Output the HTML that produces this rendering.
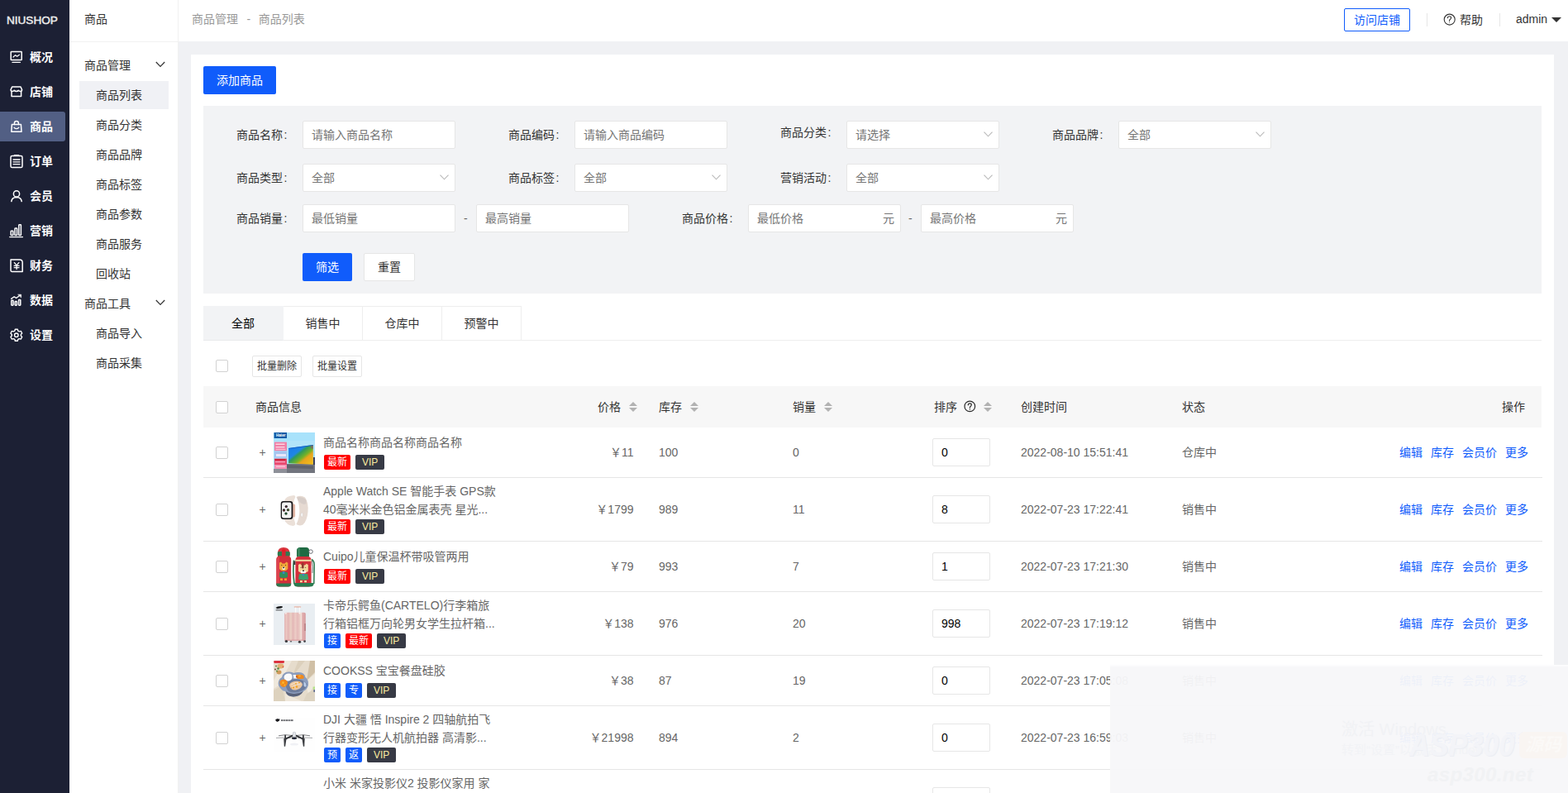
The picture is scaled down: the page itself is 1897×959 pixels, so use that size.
<!DOCTYPE html>
<html lang="zh-CN">
<head>
<meta charset="utf-8">
<title>商品列表</title>
<style>
*{box-sizing:border-box;margin:0;padding:0}
html,body{width:1897px;height:959px;overflow:hidden}
body{position:relative;background:#f0f1f4;font-family:"Liberation Sans","Noto Sans CJK SC",sans-serif;font-size:14px;color:#333;line-height:1}
a{text-decoration:none;color:inherit}
.abs{position:absolute}
/* ---------- first sidebar ---------- */
#side1{position:absolute;left:0;top:0;width:84px;height:959px;background:#1c2034}
#logo{position:absolute;left:0;top:0;width:84px;height:48px}
#logo svg{position:absolute;left:0;top:0}
.nav1{position:absolute;left:0;width:79px;height:36px;border-radius:0 3px 3px 0;color:#fff;font-weight:bold;font-size:14px;line-height:36px;padding-left:36px;white-space:nowrap}
.nav1.on{background:#525f84}
.nav1 svg{position:absolute;left:11px;top:10px;width:17px;height:17px}
/* ---------- second sidebar ---------- */
#side2{position:absolute;left:84px;top:0;width:132px;height:959px;background:#fff;border-right:1px solid #f1f1f1}
#side2 .tt{height:51px;line-height:46px;padding-left:18px;font-size:14px;color:#333;border-bottom:1px solid #f1f1f1}
.grp{position:absolute;left:0;width:131px;height:36px;line-height:36px;padding-left:18px;color:#333}
.grp svg{position:absolute;left:104px;top:13px}
.itm{position:absolute;left:12px;width:108px;height:34px;line-height:34px;padding-left:20px;color:#333}
.itm.on{background:#f0f1f5}
/* ---------- header ---------- */
#hd{position:absolute;left:216px;top:0;width:1681px;height:50px;background:#fff}
#crumb{position:absolute;left:16px;top:0;line-height:46px;color:#999;font-size:14px;white-space:pre}
#visit{position:absolute;left:1410px;top:10px;width:80px;height:28px;border:1px solid #105cfb;border-radius:2px;color:#105cfb;text-align:center;line-height:27px;font-size:14px}
.vline{position:absolute;top:16px;width:1px;height:16px;background:#e6e6e6}
/* ---------- card ---------- */
#card{position:absolute;left:231px;top:66px;width:1649px;height:900px;background:#fff}
.btn{position:absolute;height:34px;line-height:34px;text-align:center;border-radius:2px;font-size:14px}
.btn.pri{background:#105cfb;color:#fff}
.btn.def{background:#fff;border:1px solid #e6e6e6;color:#333;line-height:32px}
#filter{position:absolute;left:15px;top:62px;width:1619px;height:227px;background:#f2f3f5}
.lab{position:absolute;width:110px;text-align:right;line-height:34px;height:34px;color:#333;white-space:nowrap}
.inp{position:absolute;width:185px;height:34px;background:#fff;border:1px solid #e6e6e6;border-radius:2px;line-height:32px;padding-left:10px;color:#757575;white-space:nowrap}
.inp svg{position:absolute;right:7px;top:12px}
.inp .u{position:absolute;right:7px;top:0;color:#757575}
.lab .cl{margin-left:1.5px}
.dash{position:absolute;line-height:34px;color:#666}
/* ---------- tabs ---------- */
#tabs{position:absolute;left:15px;top:304px;width:1619px;height:42px;border-bottom:1px solid #eeeeee}
.tab{position:absolute;top:0;height:42px;line-height:41px;text-align:center;color:#333;border:1px solid #eeeeee;border-left:none}
.tab.on{background:#f2f3f5;border-color:#f2f3f5 #f2f3f5 #e9eaec #f2f3f5;color:#000}
/* ---------- table ---------- */
.ck{position:absolute;width:15px;height:15px;border:1px solid #d2d2d2;border-radius:2px;background:#fff}
.sbtn{position:absolute;top:364px;height:26px;width:60px;border:1px solid #e6e6e6;border-radius:2px;background:#fff;font-size:12px;line-height:24px;text-align:center;color:#333}
#thead{position:absolute;left:15px;top:401px;width:1619px;height:50px;background:#f7f7f7;color:#333}
#thead .th{position:absolute;top:0;line-height:50px;white-space:nowrap}
.sort{position:absolute;top:19px;width:10px;height:12px}
.sort:before,.sort:after{content:"";position:absolute;left:0;border:5px solid transparent}
.sort:before{top:-5px;border-bottom-color:#b2b2b2}
.sort:after{top:7px;border-top-color:#b2b2b2}
.row{position:absolute;left:15px;width:1620px;border-bottom:1px solid #e6e6e6;color:#666}
.row .c{position:absolute;white-space:nowrap;line-height:20px;height:20px;top:50%;margin-top:-10px}
.row .plus{left:67px;width:9px;text-align:center;color:#666;font-size:14px}
.row .img{position:absolute;left:85px;top:50%;margin-top:-24px;width:50px;height:50px;overflow:hidden}
.row .img svg{display:block}
.row .info{position:absolute;left:145px;top:0}
.row .nm{position:absolute;left:0;white-space:nowrap;line-height:22px;color:#666;font-size:14px}
.tags{position:absolute;left:1px;white-space:nowrap;height:18px;display:flex}
.tg{display:block;font-weight:normal;font-style:normal;height:18px;line-height:18px;padding:0 4px;font-size:12px;color:#fff;border-radius:2px;margin-right:6px}
.tg.r{background:#ff0000}
.tg.b{background:#105cfb}
.tg.v{background:#373a45;color:#f9eba0;padding:0 8px;font-size:12px}
.row .price{right:1099.5px;text-align:right}
.row .sin{position:absolute;left:882px;top:50%;margin-top:-17px;width:70px;height:34px;border:1px solid #e6e6e6;border-radius:2px;background:#fff;color:#000;line-height:32px;padding-left:10px}
.row .ops{right:17px;color:#105cfb;word-spacing:0}
.row .ops a{margin-left:10px;color:#105cfb}
/* ---------- overlay ---------- */
#ov{position:absolute;left:1343px;top:804px;width:554px;height:155px;background:rgba(247,247,249,0.955);border-top:2px solid rgba(252,252,253,0.97);overflow:hidden}
#ov span{position:absolute;white-space:nowrap}
#ov .w1{left:280px;top:66px;font-size:20px;color:#f1f2f5}
#ov .w2{left:280px;top:93px;font-size:15px;color:#f2f3f6}
#ov .w3{left:362px;top:76px;font-size:36px;line-height:40px;font-weight:bold;font-style:italic;color:#f3f4f8;text-shadow:1px 1px 0 #eceef3;transform:scaleX(0.95);transform-origin:0 0}
#ov .w4{left:495px;top:79px;width:58px;height:32px;border-radius:6px;background:#f9f5f2;color:#fbf9f7;font-size:22px;font-weight:bold;font-style:italic;line-height:32px;text-align:center}
#ov .w5{left:384px;top:116px;font-size:24px;line-height:30px;font-weight:bold;font-style:italic;color:#f1f2f4;letter-spacing:0.4px}
</style>
</head>
<body>

<!-- first sidebar -->
<div id="side1">
  <div id="logo">
    <svg width="84" height="48" viewBox="0 0 84 48"><text x="7.900" y="29" font-family="Liberation Sans, sans-serif" font-size="12.700" fill="#ececec" stroke="#ececec" stroke-width="0.450" textLength="62" lengthAdjust="spacingAndGlyphs">NIUSHOP</text></svg>
  </div>
  <!--NAV1-->
  <a class="nav1" style="top:51px"><svg viewBox="0 0 17 17" fill="none" stroke="#fff" stroke-width="1.5" stroke-linecap="round" stroke-linejoin="round"><rect x="2.2" y="1.6" width="13" height="10" rx="0.6"/><path d="M5 8 L7.6 5.6 L9.6 7.2 L12.4 5.2"  stroke-width="1.2"/><path d="M4 14.4 H13.4" stroke-width="1.3"/></svg>概况</a>
  <a class="nav1" style="top:93px"><svg viewBox="0 0 17 17" fill="none" stroke="#fff" stroke-width="1.5" stroke-linecap="round" stroke-linejoin="round"><path d="M3.6 2 H14 L15.6 5.6 Q15.6 7.4 13.8 7.4 Q12.2 7.4 11.4 6.4 Q10.4 7.4 8.8 7.4 Q7.2 7.4 6.2 6.4 Q5.4 7.4 3.8 7.4 Q2 7.4 2 5.6 Z"/><path d="M3 7.6 V13.4 H14.6 V7.6"/></svg>店铺</a>
  <a class="nav1 on" style="top:135px"><svg viewBox="0 0 17 17" fill="none" stroke="#fff" stroke-width="1.5" stroke-linecap="round" stroke-linejoin="round"><path d="M3.4 5.6 H14.4 L15 14.2 H2.8 Z"/><path d="M6.4 5.4 V4 A2.5 2.5 0 0 1 11.4 4 V5.4"/><path d="M6 9.2 Q8.9 12 11.8 9.2" stroke-width="1.3"/></svg>商品</a>
  <a class="nav1" style="top:177px"><svg viewBox="0 0 17 17" fill="none" stroke="#fff" stroke-width="1.5" stroke-linecap="round" stroke-linejoin="round"><rect x="2" y="1.6" width="14" height="14" rx="1.6"/><path d="M6.4 0.9 H11.6" stroke-width="1.6"/><path d="M5 6 H13 M5 8.8 H13 M5 11.6 H13" stroke-width="1.3"/></svg>订单</a>
  <a class="nav1" style="top:219px"><svg viewBox="0 0 17 17" fill="none" stroke="#fff" stroke-width="1.5" stroke-linecap="round" stroke-linejoin="round"><circle cx="9" cy="5.4" r="3.6"/><path d="M2.8 14.6 Q3.4 9.8 9 9.6 Q14.6 9.8 15.2 14.6"/></svg>会员</a>
  <a class="nav1" style="top:261px"><svg viewBox="0 0 17 17" fill="none" stroke="#fff" stroke-width="1.5" stroke-linecap="round" stroke-linejoin="round" stroke-width="1.2"><rect x="2.2" y="8.2" width="2.6" height="5.4" rx="0.6"/><rect x="7" y="5" width="2.6" height="8.6" rx="0.6"/><rect x="11.8" y="0.8" width="2.6" height="12.8" rx="0.6"/><path d="M0.6 15.6 H16.6" stroke-width="1.1"/></svg>营销</a>
  <a class="nav1" style="top:303px"><svg viewBox="0 0 17 17" fill="none" stroke="#fff" stroke-width="1.5" stroke-linecap="round" stroke-linejoin="round"><path d="M2 1 H12.6 Q16.2 1 16.2 4.6 V15.4 H3.4 Q2 15.4 2 14 Z"/><path d="M6.4 4.6 L9.1 7.8 L11.8 4.6 M9.1 7.8 V12.6 M6.2 8.4 H12 M6.2 10.6 H12" stroke-width="1.3"/></svg>财务</a>
  <a class="nav1" style="top:345px"><svg viewBox="0 0 17 17" fill="none" stroke="#fff" stroke-width="1.5" stroke-linecap="round" stroke-linejoin="round" stroke-width="1.2"><rect x="2.8" y="8.2" width="2.2" height="6" rx="0.6"/><rect x="7.2" y="9.6" width="2.2" height="4.6" rx="0.6"/><rect x="11.6" y="7.4" width="2.2" height="6.8" rx="0.6"/><path d="M2.6 6.4 L6.2 3.8 L8.6 5.6 L13 2.2" stroke-width="1.3"/><path d="M11 1.2 H14.6 V4.6 Z" fill="#fff" stroke-width="0.6"/></svg>数据</a>
  <a class="nav1" style="top:387px"><svg viewBox="0 0 17 17" fill="none" stroke="#fff" stroke-width="1.5" stroke-linecap="round" stroke-linejoin="round"><path d="M7.3 1.2 H10.3 L10.8 3.1 L12.3 3.9 L14.2 3.4 L15.7 6 L14.3 7.4 V9.1 L15.7 10.5 L14.2 13.1 L12.3 12.6 L10.8 13.4 L10.3 15.3 H7.3 L6.8 13.4 L5.3 12.6 L3.4 13.1 L1.9 10.5 L3.3 9.1 V7.4 L1.9 6 L3.4 3.4 L5.3 3.9 L6.8 3.1 Z" stroke-width="1.4"/><circle cx="8.8" cy="8.25" r="2.3" stroke-width="1.4"/></svg>设置</a>
  <!--/NAV1-->
</div>

<!-- second sidebar -->
<div id="side2">
  <div class="tt">商品</div>
  <!--NAV2-->
  <div class="grp" style="top:61px">商品管理<svg width="12" height="8" viewBox="0 0 12 8" fill="none" stroke="#333" stroke-width="1.2"><path d="M0.8 1 L6 6.4 L11.2 1"/></svg></div>
  <a class="itm on" style="top:98px">商品列表</a>
  <a class="itm" style="top:134px">商品分类</a>
  <a class="itm" style="top:170px">商品品牌</a>
  <a class="itm" style="top:206px">商品标签</a>
  <a class="itm" style="top:242px">商品参数</a>
  <a class="itm" style="top:278px">商品服务</a>
  <a class="itm" style="top:314px">回收站</a>
  <div class="grp" style="top:349px">商品工具<svg width="12" height="8" viewBox="0 0 12 8" fill="none" stroke="#333" stroke-width="1.2"><path d="M0.8 1 L6 6.4 L11.2 1"/></svg></div>
  <a class="itm" style="top:386px">商品导入</a>
  <a class="itm" style="top:422px">商品采集</a>
  <!--/NAV2-->
</div>

<!-- header -->
<div id="hd">
  <div id="crumb"><span>商品管理</span><span style="margin:0 9.700px 0 10.500px">-</span><span>商品列表</span></div>
  <a id="visit">访问店铺</a>
  <!--HDR-->
  <i class="vline" style="left:1510px"></i>
  <svg class="abs" style="left:1530px;top:16px" width="15" height="15" viewBox="0 0 15 15" fill="none" stroke="#333" stroke-width="1.1"><circle cx="7.7" cy="7.6" r="6.5"/><path d="M5.4 5.8 Q5.4 3.8 7.5 3.8 Q9.6 3.8 9.6 5.6 Q9.6 6.8 8.4 7.5 Q7.5 8 7.5 9.2" stroke-linecap="round"/><circle cx="7.5" cy="11.1" r="0.5" fill="#333" stroke="none"/></svg>
  <span class="abs" style="left:1550px;top:0;line-height:48px;color:#333;white-space:nowrap">帮助</span>
  <i class="vline" style="left:1598px"></i>
  <span class="abs" style="left:1618px;top:0;line-height:46px;color:#333;white-space:nowrap">admin</span>
  <i class="abs" style="left:1661px;top:21px;width:0;height:0;border:6px solid transparent;border-top-color:#333;border-bottom:none"></i>
  <!--/HDR-->
</div>

<!-- card -->
<div id="card">
  <a class="btn pri" style="left:15px;top:14px;width:88px">添加商品</a>
  <div id="filter">
    <!--FILTER-->
    <label class="lab" style="left:-8.5px;top:18px">商品名称<span class="cl">:</span></label>
    <div class="inp" style="left:120px;top:18px">请输入商品名称</div>
    <label class="lab" style="left:320.5px;top:18px">商品编码<span class="cl">:</span></label>
    <div class="inp" style="left:449px;top:18px">请输入商品编码</div>
    <label class="lab" style="left:649.5px;top:15px">商品分类<span class="cl">:</span></label>
    <div class="inp" style="left:778px;top:18px">请选择<svg width="11" height="7" viewBox="0 0 11 7" fill="none" stroke="#b9b9b9" stroke-width="1.15"><path d="M0.5 0.7 L5.5 5.8 L10.5 0.7"/></svg></div>
    <label class="lab" style="left:978.5px;top:18px">商品品牌<span class="cl">:</span></label>
    <div class="inp" style="left:1107px;top:18px">全部<svg width="11" height="7" viewBox="0 0 11 7" fill="none" stroke="#b9b9b9" stroke-width="1.15"><path d="M0.5 0.7 L5.5 5.8 L10.5 0.7"/></svg></div>
    <label class="lab" style="left:-8.5px;top:70px">商品类型<span class="cl">:</span></label>
    <div class="inp" style="left:120px;top:70px">全部<svg width="11" height="7" viewBox="0 0 11 7" fill="none" stroke="#b9b9b9" stroke-width="1.15"><path d="M0.5 0.7 L5.5 5.8 L10.5 0.7"/></svg></div>
    <label class="lab" style="left:320.5px;top:70px">商品标签<span class="cl">:</span></label>
    <div class="inp" style="left:449px;top:70px">全部<svg width="11" height="7" viewBox="0 0 11 7" fill="none" stroke="#b9b9b9" stroke-width="1.15"><path d="M0.5 0.7 L5.5 5.8 L10.5 0.7"/></svg></div>
    <label class="lab" style="left:649.5px;top:70px">营销活动<span class="cl">:</span></label>
    <div class="inp" style="left:778px;top:70px">全部<svg width="11" height="7" viewBox="0 0 11 7" fill="none" stroke="#b9b9b9" stroke-width="1.15"><path d="M0.5 0.7 L5.5 5.8 L10.5 0.7"/></svg></div>
    <label class="lab" style="left:-8.5px;top:119px">商品销量<span class="cl">:</span></label>
    <div class="inp" style="left:120px;top:119px">最低销量</div>
    <span class="dash" style="left:315px;top:119px">-</span>
    <div class="inp" style="left:330px;top:119px">最高销量</div>
    <label class="lab" style="left:530.5px;top:119px">商品价格<span class="cl">:</span></label>
    <div class="inp" style="left:659px;top:119px">最低价格<span class="u">元</span></div>
    <span class="dash" style="left:853px;top:119px">-</span>
    <div class="inp" style="left:868px;top:119px">最高价格<span class="u">元</span></div>
    <a class="btn pri" style="left:120px;top:178px;width:60px">筛选</a>
    <a class="btn def" style="left:194px;top:178px;width:62px">重置</a>
  <!--/FILTER-->
  </div>
  <div id="tabs">
    <!--TABS-->
    <a class="tab on" style="left:0px;width:97px">全部</a>
    <a class="tab" style="left:97px;width:96px">销售中</a>
    <a class="tab" style="left:193px;width:96px">仓库中</a>
    <a class="tab" style="left:289px;width:96px">预警中</a>
  <!--/TABS-->
  </div>
  <!--TABLE-->
  <i class="ck" style="left:30px;top:369px"></i>
  <a class="sbtn" style="left:74px">批量删除</a>
  <a class="sbtn" style="left:147px">批量设置</a>
  <div id="thead">
    <i class="ck" style="left:15px;top:18px"></i>
    <span class="th" style="left:63px">商品信息</span>
    <span class="th" style="left:477px">价格</span><i class="sort" style="left:515px"></i>
    <span class="th" style="left:551px">库存</span><i class="sort" style="left:589px"></i>
    <span class="th" style="left:713px">销量</span><i class="sort" style="left:751px"></i>
    <span class="th" style="left:884px">排序</span><svg class="abs" style="left:920px;top:17px" width="15" height="15" viewBox="0 0 15 15" fill="none" stroke="#2a2a2a" stroke-width="1.2"><circle cx="7.3" cy="7.4" r="6.3"/><path d="M5.3 5.8 Q5.3 3.9 7.3 3.9 Q9.3 3.9 9.3 5.6 Q9.3 6.7 8.2 7.4 Q7.3 8 7.3 9.1" stroke-linecap="round"/><circle cx="7.3" cy="11" r="0.65" fill="#2a2a2a" stroke="none"/></svg><i class="sort" style="left:944px"></i>
    <span class="th" style="left:989px">创建时间</span>
    <span class="th" style="left:1184px">状态</span>
    <span class="th" style="right:20px">操作</span>
  </div>
  <div class="row" style="top:451px;height:61px">
    <i class="ck" style="left:15px;top:23px"></i>
    <span class="c plus">+</span>
    <div class="img"><svg width="50" height="50" viewBox="0 0 50 50"><defs><linearGradient id="tvg" x1="0" y1="0" x2="1" y2="1"><stop offset="0" stop-color="#1877ea"/><stop offset="0.36" stop-color="#1f86e4"/><stop offset="0.44" stop-color="#2f9a5c"/><stop offset="0.6" stop-color="#74b227"/><stop offset="0.7" stop-color="#e9a41e"/><stop offset="1" stop-color="#f4c21a"/></linearGradient></defs>
<rect width="50" height="49" fill="#a8e2fb"/><rect x="0" y="10" width="50" height="12" fill="#b9e6f8" opacity="0.6"/>
<rect x="0.600" y="0" width="15.400" height="7" fill="#0f5aa6"/><text x="3" y="5.300" font-family="Liberation Sans, sans-serif" font-size="4.600" font-weight="bold" fill="#fff">Haier</text>
<rect x="0" y="44" width="50" height="5" fill="#8d9098"/><path d="M16 38 H50 V49 H16 Z" fill="#72757e"/><path d="M16 39 L48 40.500 L48 44 L16 43 Z" fill="#5f626c"/>
<rect x="47.800" y="30" width="2.200" height="9" fill="#3a4060"/>
<rect x="1" y="11.600" width="15" height="10.600" fill="#f17ea6"/><rect x="2.500" y="13.500" width="11" height="1.500" fill="#fbd3e0"/><rect x="2.500" y="17" width="11" height="1.400" fill="#fbd3e0"/><rect x="2.500" y="19.800" width="12" height="1.200" fill="#f9c0d4"/>
<rect x="1" y="22.800" width="15" height="7.600" fill="#a6c5ef"/><rect x="3" y="26" width="12" height="3" fill="#e9e6fa"/>
<rect x="1" y="31.600" width="15" height="7.400" fill="#e84a70"/><rect x="1.500" y="32" width="13" height="1.600" fill="#c51f2f"/><rect x="2" y="35" width="12" height="1.200" fill="#f7a8c0"/>
<rect x="1" y="39" width="15" height="5" fill="#f58fb3"/><rect x="3" y="40.500" width="11" height="1.200" fill="#fbd0de"/>
<path d="M18.100 19 L47.800 15 L47.800 38.800 L18.100 37.200 Z" fill="url(#tvg)"/><path d="M18.100 19 L47.800 15 L47.800 16 L18.100 20 Z" fill="#1562c9"/><path d="M45 16 L47.800 15.600 L47.800 20 L45 19 Z" fill="#8c5a6a" opacity="0.700"/>
</svg></div>
    <div class="info"><span class="nm" style="top:7px">商品名称商品名称商品名称</span><div class="tags" style="top:33px"><b class="tg r">最新</b><b class="tg v">VIP</b></div></div>
    <span class="c price">￥11</span>
    <span class="c" style="left:551px">100</span>
    <span class="c" style="left:713px">0</span>
    <div class="sin">0</div>
    <span class="c" style="left:989px">2022-08-10 15:51:41</span>
    <span class="c" style="left:1184px">仓库中</span>
    <span class="c ops"><a>编辑</a><a>库存</a><a>会员价</a><a>更多</a></span>
  </div>
  <div class="row" style="top:512px;height:77px">
    <i class="ck" style="left:15px;top:31px"></i>
    <span class="c plus">+</span>
    <div class="img"><svg width="50" height="50" viewBox="0 0 50 50"><rect width="50" height="50" fill="#fff"/>
<path d="M27.500 9 Q33 6.500 38 9.500 Q42.500 16 41.500 27 Q40.500 38 35.500 42.500 Q31 44.500 27.500 42 Q31.500 34 31.300 25 Q31 15 27.500 9 Z" fill="#e6dad2"/>
<path d="M28.500 9.500 Q34 8 39 12 Q40.500 15 39 17.500 Q34 19 29.500 13 Z" fill="#d3c9c6" opacity="0.800"/>
<path d="M13 14 Q14.500 7.500 24.500 7 Q27.500 7.500 25.500 11 Q23.500 15 23.800 25 Q24 35 26 40 Q27 43.500 23.500 44 Q15.500 43 12.500 36 Z" fill="#ebe0d8"/>
<ellipse cx="34.200" cy="30.500" rx="1.300" ry="2.600" fill="#f8f8f8" stroke="#c9c3c0" stroke-width="0.400"/>
<rect x="22.500" y="17.500" width="3.600" height="16" rx="1.600" fill="#e3b7a6"/>
<rect x="8.700" y="14" width="14.600" height="22" rx="3.200" fill="#17171a"/>
<rect x="10" y="15.600" width="11.600" height="18.800" rx="2.200" fill="#f3f3f3"/>
<circle cx="15.300" cy="20.600" r="1.650" fill="#20242a"/><circle cx="12.500" cy="25" r="1.650" fill="#2a2326"/><circle cx="17.500" cy="24.700" r="1.650" fill="#1f2b22"/><circle cx="15" cy="29.100" r="1.650" fill="#16311f"/>
<circle cx="15.300" cy="21" r="0.600" fill="#c23a4a"/><circle cx="17.800" cy="24.700" r="0.600" fill="#9fb23a"/><circle cx="12.300" cy="25.400" r="0.500" fill="#b8322e"/><circle cx="15" cy="29.300" r="0.600" fill="#2f9a4e"/>
</svg></div>
    <div class="info"><span class="nm" style="top:5px">Apple Watch SE 智能手表 GPS款</span><span class="nm" style="top:27px">40毫米米金色铝金属表壳 星光...</span><div class="tags" style="top:50px"><b class="tg r">最新</b><b class="tg v">VIP</b></div></div>
    <span class="c price">￥1799</span>
    <span class="c" style="left:551px">989</span>
    <span class="c" style="left:713px">11</span>
    <div class="sin">8</div>
    <span class="c" style="left:989px">2022-07-23 17:22:41</span>
    <span class="c" style="left:1184px">销售中</span>
    <span class="c ops"><a>编辑</a><a>库存</a><a>会员价</a><a>更多</a></span>
  </div>
  <div class="row" style="top:589px;height:61px">
    <i class="ck" style="left:15px;top:23px"></i>
    <span class="c plus">+</span>
    <div class="img"><svg width="50" height="50" viewBox="0 0 50 50"><rect width="50" height="50" fill="#fff"/>
<path d="M5 8 Q5 1 12 1 Q19.500 1 19.500 8 V12 H5 Z" fill="#d9363f"/>
<rect x="4.800" y="6" width="15" height="5.600" rx="1.500" fill="#2e7a4f"/>
<rect x="10" y="3" width="4.600" height="9.500" rx="1.500" fill="#d42531"/><rect x="10.800" y="3.600" width="3" height="2" fill="#f01818"/>
<path d="M3.200 16 Q3.200 11.500 7.500 11.500 H17 Q21.200 11.500 21.200 16 V45 Q21.200 48.500 17.500 48.500 H7 Q3.200 48.500 3.200 45 Z" fill="#d22f3a"/>
<path d="M4 16 Q4 12.500 7 12.500 V47.500 Q4 47.500 4 45 Z" fill="#e24a55" opacity="0.700"/>
<path d="M3.200 44.500 H21.200 V45 Q21.200 48.500 17.500 48.500 H7 Q3.200 48.500 3.200 45 Z" fill="#2b7b50"/>
<path d="M7 19.500 L9 18.500 L10.500 20.500 H13.500 L15.500 18.500 L17.300 19.800 V27 Q15.500 29.500 12.200 29.500 Q8.500 29.500 7 27 Z" fill="#f1a93b"/>
<rect x="10.500" y="24.500" width="3.400" height="3.400" rx="1.200" fill="#fff6e8"/><circle cx="12.200" cy="25.400" r="0.900" fill="#1b1b1b"/>
<circle cx="9.800" cy="22.600" r="0.500" fill="#222"/><circle cx="14.600" cy="22.600" r="0.500" fill="#222"/>
<path d="M7.200 31.500 Q12 29 17 31.500 V37 Q12.200 39 7.200 37 Z" fill="#2f8f5a"/><rect x="10.800" y="30.300" width="2.600" height="2.600" fill="#3f7fd0"/>
<rect x="8" y="38.500" width="3" height="2.600" fill="#f1a030"/><rect x="13" y="38.500" width="3" height="2.600" fill="#f1a030"/>
<path d="M28 4.500 Q28 1 32 1 H39.500 Q43 1 43 4.500 V12.500 H28 Z" fill="#1f6b43"/><rect x="29" y="2" width="3" height="10" fill="#3e8c62" opacity="0.700"/>
<circle cx="45" cy="6.100" r="2.300" fill="#fff" stroke="#5a5f66" stroke-width="0.900"/>
<path d="M26.400 17 Q26.400 12 31 12 H41 Q45.600 12 45.600 17 V45.500 Q45.600 48.500 42 48.500 H30 Q26.400 48.500 26.400 45.500 Z" fill="#d3303b"/>
<rect x="26.400" y="15.800" width="19.200" height="2" fill="#f0d8a2"/>
<path d="M24.300 44 H48.800 Q48.800 48.500 44 48.500 H29 Q24.300 48.500 24.300 44 Z" fill="#2b7b50"/>
<path d="M30 22 L32 20.800 L33.800 22.500 H38 L39.800 20.800 L41.800 22 V30 Q39 32 36 32 Q32.500 32 30 30 Z" fill="#f3d79a"/>
<rect x="34" y="19.500" width="2.600" height="7" rx="1" fill="#8f3a2f"/><circle cx="33" cy="25.300" r="0.500" fill="#222"/><circle cx="38.700" cy="25.300" r="0.500" fill="#222"/>
<rect x="32.800" y="29" width="6.200" height="3.200" rx="1" fill="#fbf6ee"/><circle cx="36" cy="29.200" r="0.900" fill="#1b1b1b"/>
<path d="M31 33 H41 L42.300 39.500 Q36 41.500 30 39.500 Z" fill="#3fa06e"/><rect x="34.800" y="33" width="2.400" height="2.200" fill="#3f7fd0"/>
<rect x="32" y="41" width="2.800" height="2.300" fill="#f6dba0"/><rect x="37.200" y="41" width="2.800" height="2.300" fill="#f6dba0"/>
<path d="M46 15.500 Q49.500 17 49.300 24 Q49 33 48.800 45" fill="none" stroke="#2d7c51" stroke-width="1.500"/><path d="M46.500 17 Q48 24 47 32" fill="none" stroke="#263b33" stroke-width="0.700"/>
<path d="M24.500 16.500 Q23 30 25 45" fill="none" stroke="#2d7c51" stroke-width="1.700"/><rect x="24" y="17.500" width="2.400" height="4.500" fill="#3a3f3c"/>
</svg></div>
    <div class="info"><span class="nm" style="top:7px">Cuipo儿童保温杯带吸管两用</span><div class="tags" style="top:33px"><b class="tg r">最新</b><b class="tg v">VIP</b></div></div>
    <span class="c price">￥79</span>
    <span class="c" style="left:551px">993</span>
    <span class="c" style="left:713px">7</span>
    <div class="sin">1</div>
    <span class="c" style="left:989px">2022-07-23 17:21:30</span>
    <span class="c" style="left:1184px">销售中</span>
    <span class="c ops"><a>编辑</a><a>库存</a><a>会员价</a><a>更多</a></span>
  </div>
  <div class="row" style="top:650px;height:77px">
    <i class="ck" style="left:15px;top:31px"></i>
    <span class="c plus">+</span>
    <div class="img"><svg width="50" height="50" viewBox="0 0 50 50"><defs><linearGradient id="csg" x1="0" y1="0" x2="1" y2="0"><stop offset="0" stop-color="#e2b1b1"/><stop offset="0.1" stop-color="#ecc8c2"/><stop offset="0.18" stop-color="#e3b4b4"/><stop offset="0.3" stop-color="#ead1c5"/><stop offset="0.4" stop-color="#e4b7b6"/><stop offset="0.52" stop-color="#ecccc6"/><stop offset="0.62" stop-color="#e5bab9"/><stop offset="0.74" stop-color="#ecd0c8"/><stop offset="0.8" stop-color="#f1e3dc"/><stop offset="0.84" stop-color="#e2b0b0"/><stop offset="1" stop-color="#d59c9f"/></linearGradient></defs>
<rect width="50" height="50" fill="#e9eef2"/>
<path d="M2.400 5 Q5 2.600 10.800 3.200 Q11.400 4.800 9 5.600 L4.500 6.200 Z" fill="#1d1d1f"/><rect x="2.600" y="7.400" width="8.200" height="0.900" fill="#3a3a3c"/>
<rect x="24.700" y="3.200" width="8.500" height="1.500" rx="0.600" fill="#e9b9ab"/><rect x="26" y="4.600" width="1.300" height="6.500" fill="#fbfbfb"/><rect x="30.800" y="4.600" width="1.300" height="6.500" fill="#fbfbfb"/>
<rect x="13.100" y="10.700" width="25.700" height="34" rx="1.800" fill="url(#csg)"/>
<path d="M13.600 12 Q13.800 11 16 11 L14.800 13 Z" fill="#fbf3f0"/><path d="M30 11 H32.500 L32 13 Z" fill="#fbf3f0"/>
<rect x="37.600" y="24" width="0.900" height="9" fill="#a05f66"/>
<rect x="13.500" y="43.600" width="25" height="1.200" fill="#d9a0a2"/>
<ellipse cx="15.400" cy="45.600" rx="1.700" ry="1.500" fill="#3a3a3e"/><ellipse cx="31.500" cy="46.300" rx="1.700" ry="1.500" fill="#3a3a3e"/><ellipse cx="37.600" cy="45.600" rx="1.400" ry="1.300" fill="#45454a"/><rect x="19" y="45.400" width="10" height="1.300" fill="#d7dadd"/><ellipse cx="21" cy="45.800" rx="1.200" ry="0.800" fill="#55575c"/>
</svg></div>
    <div class="info"><span class="nm" style="top:5px">卡帝乐鳄鱼(CARTELO)行李箱旅</span><span class="nm" style="top:27px">行箱铝框万向轮男女学生拉杆箱...</span><div class="tags" style="top:50px"><b class="tg b">接</b><b class="tg r">最新</b><b class="tg v">VIP</b></div></div>
    <span class="c price">￥138</span>
    <span class="c" style="left:551px">976</span>
    <span class="c" style="left:713px">20</span>
    <div class="sin">998</div>
    <span class="c" style="left:989px">2022-07-23 17:19:12</span>
    <span class="c" style="left:1184px">销售中</span>
    <span class="c ops"><a>编辑</a><a>库存</a><a>会员价</a><a>更多</a></span>
  </div>
  <div class="row" style="top:727px;height:61px">
    <i class="ck" style="left:15px;top:23px"></i>
    <span class="c plus">+</span>
    <div class="img"><svg width="50" height="50" viewBox="0 0 50 50"><rect width="50" height="49" fill="#e6dccc"/>
<path d="M14 0 L22 0 L6 30 L0 34 V24 Z" fill="#efe8dc"/><path d="M30 0 H38 L22 20 Z" fill="#d9cdb8" opacity="0.800"/><path d="M44 0 H50 V14 L40 24 Z" fill="#cbb99c" opacity="0.800"/><path d="M38 26 L50 16 V30 L42 40 Z" fill="#efe9de"/><path d="M0 36 L10 30 L14 49 H0 Z" fill="#ddd2be"/><path d="M14 40 L34 49 H14 Z" fill="#efe8dc"/><path d="M40 40 L50 34 V49 H36 Z" fill="#ddd3c1"/>
<rect x="0.300" y="0" width="12.600" height="2.900" rx="0.800" fill="#dc3340"/>
<ellipse cx="8.500" cy="6.500" rx="4" ry="3" fill="#e5b074"/><ellipse cx="6.500" cy="14" rx="3" ry="2.400" fill="#cf9a5a"/><circle cx="5.500" cy="9.500" r="1.300" fill="#4f8a3c"/><circle cx="3" cy="6.500" r="0.900" fill="#5a7d3a"/><circle cx="2" cy="10.500" r="1" fill="#7a4a3c"/><circle cx="11.500" cy="7.500" r="0.700" fill="#d2363a"/><circle cx="4" cy="12.500" r="0.900" fill="#4f8a3c"/>
<rect x="47.600" y="31.500" width="2.400" height="3.200" fill="#b5e38a"/><rect x="48.400" y="35" width="1.600" height="3" fill="#5f6a8a"/>
<path d="M10 20 Q11 14 18 13.500 Q22 13 24.500 15 Q27 13.500 31 14 Q37.500 14.500 38.500 20 Q42.500 23 42 29 Q41.500 34 36 37 Q32 43.500 24 43.500 Q16 43.500 14.500 37 Q11 37 8.500 33.500 Q5 30 5.800 26 Q6.500 22 10 20 Z" fill="#8c9dbd"/>
<path d="M14.500 37 Q16 43.500 24 43.500 Q32 43.500 36 37 Q30 40.500 24 40 Q18 39.500 14.500 37 Z" fill="#59627a"/>
<path d="M15 27 Q20 21 30 22.500 Q39 24 40.500 29 Q40 34 34 36.500 Q26 40 19 37.500 Q14 34 15 27 Z" fill="#6d7c9c"/>
<path d="M12.500 20 Q13 15.800 18.500 15.600 Q22.500 15.500 22.500 19.500 Q22.500 23.500 18.500 24.500 Q13 24.500 12.500 20 Z" fill="#fafafa"/>
<path d="M23.500 17 H27 L28.500 21.500 H24.500 Z" fill="#f4f6fa"/>
<path d="M27 17.500 Q31 15.800 35.500 17.500 Q37.500 19 36.500 21.500 Q32 22.500 28.500 21.500 Q26.500 19.500 27 17.500 Z" fill="#f08a1c"/><circle cx="31.500" cy="18.500" r="1.300" fill="#f6a83a"/><circle cx="28" cy="19.600" r="0.800" fill="#a3302c"/>
<path d="M7.500 25 Q9 22.200 13 22.800 Q17 23.600 17 27 Q16 31.500 12 32 Q7 31 7.500 25 Z" fill="#f0891b"/><circle cx="11.500" cy="26.500" r="1.500" fill="#f8b62e"/><circle cx="13.500" cy="29.500" r="1" fill="#f8b62e"/><circle cx="9.500" cy="28.500" r="0.900" fill="#f6a01e"/>
<path d="M19 29 Q22 24.500 28.500 24.800 Q34.500 25 35 29 Q33.500 34 27 35.500 Q20.500 36.500 19 29 Z" fill="#ecc7a0"/><path d="M22 32 Q27 28 33 28" stroke="#f7e6cf" stroke-width="0.900" fill="none"/><path d="M21 29 Q26 26 31 26.500" stroke="#f7e6cf" stroke-width="0.800" fill="none"/>
<circle cx="24" cy="32.500" r="1.100" fill="#f5a21e"/><circle cx="28" cy="31.500" r="1.200" fill="#f5a21e"/><circle cx="27" cy="27.800" r="0.900" fill="#f5a21e"/><circle cx="31" cy="26.300" r="0.900" fill="#f29a1a"/><circle cx="21.500" cy="33" r="0.700" fill="#f08a1c"/>
<path d="M36.500 25 Q40 27 39.500 31 Q37.500 33 36.500 30 Z" fill="#b9cdea"/>
</svg></div>
    <div class="info"><span class="nm" style="top:7px">COOKSS 宝宝餐盘硅胶</span><div class="tags" style="top:33px"><b class="tg b">接</b><b class="tg b">专</b><b class="tg v">VIP</b></div></div>
    <span class="c price">￥38</span>
    <span class="c" style="left:551px">87</span>
    <span class="c" style="left:713px">19</span>
    <div class="sin">0</div>
    <span class="c" style="left:989px">2022-07-23 17:05:08</span>
    <span class="c" style="left:1184px">销售中</span>
    <span class="c ops"><a>编辑</a><a>库存</a><a>会员价</a><a>更多</a></span>
  </div>
  <div class="row" style="top:788px;height:77px">
    <i class="ck" style="left:15px;top:31px"></i>
    <span class="c plus">+</span>
    <div class="img"><svg width="50" height="50" viewBox="0 0 50 50"><rect width="50" height="50" fill="#fff"/><rect x="0" y="0" width="50" height="42" fill="#fefefe"/>
<ellipse cx="25" cy="32" rx="5" ry="1.600" fill="#f0f1f5"/>
<path d="M2 2.800 L3.500 1.600 H7.500 L7 3.400 Q6 4.600 3.500 4.400 Z" fill="#16161a"/><rect x="4.200" y="1.200" width="1" height="3.600" fill="#16161a"/>
<rect x="9" y="2.200" width="2.600" height="1.900" fill="#6a6b70"/><rect x="12" y="2.200" width="2.600" height="1.900" fill="#77787c"/><rect x="15" y="2.200" width="2.600" height="1.900" fill="#6a6b70"/><rect x="18" y="2.200" width="2.600" height="1.900" fill="#77787c"/><rect x="21" y="2.200" width="2.600" height="1.900" fill="#6a6b70"/>
<path d="M6 21.800 Q14 19.800 22 21.400" stroke="#4a4c50" stroke-width="0.700" fill="none"/><path d="M3 24.400 Q12 23.600 21 24.600" stroke="#6a6c70" stroke-width="0.600" fill="none"/>
<path d="M28 21.400 Q36 19.800 44 21.800" stroke="#4a4c50" stroke-width="0.700" fill="none"/><path d="M29 24.600 Q38 23.600 47 24.400" stroke="#6a6c70" stroke-width="0.600" fill="none"/>
<path d="M13.600 25 L23 20.600 L24 22 L14.400 26.800 Z" fill="#2d2f33"/><path d="M36.400 25 L27 20.600 L26 22 L35.600 26.800 Z" fill="#2d2f33"/>
<rect x="13.300" y="20.800" width="1.700" height="5.500" rx="0.600" fill="#303236"/><rect x="35" y="20.800" width="1.700" height="5.500" rx="0.600" fill="#303236"/>
<path d="M12.300 25 H15.600 L14.100 34.800 H12.800 Z" fill="#3a3c40"/><path d="M37.700 25 H34.400 L35.900 34.800 H37.200 Z" fill="#3a3c40"/>
<path d="M23 18.400 Q23 16.800 25 16.800 Q27 16.800 27 18.400 V24 H23 Z" fill="#c9ccd2"/><rect x="24.200" y="17.600" width="1.600" height="5" fill="#eceef2"/>
<path d="M21.500 23.400 H28.500 L27.500 26 H22.500 Z" fill="#35373c"/><circle cx="25" cy="25.200" r="1.100" fill="#1c2340"/>
</svg></div>
    <div class="info"><span class="nm" style="top:5px">DJI 大疆 悟 Inspire 2 四轴航拍飞</span><span class="nm" style="top:27px">行器变形无人机航拍器 高清影...</span><div class="tags" style="top:50px"><b class="tg b">预</b><b class="tg b">返</b><b class="tg v">VIP</b></div></div>
    <span class="c price">￥21998</span>
    <span class="c" style="left:551px">894</span>
    <span class="c" style="left:713px">2</span>
    <div class="sin">0</div>
    <span class="c" style="left:989px">2022-07-23 16:59:03</span>
    <span class="c" style="left:1184px">销售中</span>
    <span class="c ops"><a>编辑</a><a>库存</a><a>会员价</a><a>更多</a></span>
  </div>
  <div class="row" style="top:865px;height:77px">
    <div class="info"><span class="nm" style="top:5px">小米 米家投影仪2 投影仪家用 家</span></div>
    <div class="sin"></div>
  </div>
  <!--/TABLE-->
</div>

<!-- overlay -->
<div id="ov">
  <!--OV-->
  <span class="w1">激活 Windows</span>
  <span class="w2">转到“设置”以激活 Windows。</span>
  <span class="w3">ASP300</span>
  <span class="w4">源码</span>
  <span class="w5">asp300.net</span>
  <!--/OV-->
</div>

</body>
</html>
